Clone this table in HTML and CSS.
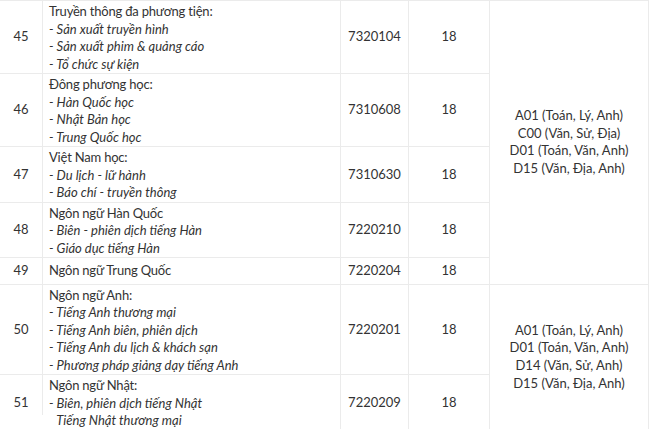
FILE: index.html
```html
<!DOCTYPE html>
<html lang="vi">
<head>
<meta charset="utf-8">
<link rel="stylesheet" href="styles.css">
</head>
<body>
<div class="page">
<table class="majors">
  <colgroup>
    <col class="c-num"><col class="c-name"><col class="c-code"><col class="c-score"><col class="c-combo">
  </colgroup>
  <tbody>
    <tr>
      <td class="num">45</td>
      <td class="name"><div class="head">Truyền thông đa phương tiện:</div><div class="sub">- Sản xuất truyền hình</div><div class="sub">- Sản xuất phim &amp; quảng cáo</div><div class="sub">- Tổ chức sự kiện</div></td>
      <td class="code">7320104</td>
      <td class="score">18</td>
      <td class="combo" rowspan="5"><div>A01 (Toán, Lý, Anh)</div><div>C00 (Văn, Sử, Địa)</div><div>D01 (Toán, Văn, Anh)</div><div>D15 (Văn, Địa, Anh)</div></td>
    </tr>
    <tr>
      <td class="num">46</td>
      <td class="name"><div class="head">Đông phương học:</div><div class="sub">- Hàn Quốc học</div><div class="sub">- Nhật Bản học</div><div class="sub">- Trung Quốc học</div></td>
      <td class="code">7310608</td>
      <td class="score">18</td>
    </tr>
    <tr>
      <td class="num">47</td>
      <td class="name"><div class="head">Việt Nam học:</div><div class="sub">- Du lịch - lữ hành</div><div class="sub">- Báo chí - truyền thông</div></td>
      <td class="code">7310630</td>
      <td class="score">18</td>
    </tr>
    <tr>
      <td class="num">48</td>
      <td class="name"><div class="head">Ngôn ngữ Hàn Quốc</div><div class="sub">- Biên - phiên dịch tiếng Hàn</div><div class="sub">- Giáo dục tiếng Hàn</div></td>
      <td class="code">7220210</td>
      <td class="score">18</td>
    </tr>
    <tr>
      <td class="num">49</td>
      <td class="name single"><div class="head">Ngôn ngữ Trung Quốc</div></td>
      <td class="code">7220204</td>
      <td class="score">18</td>
    </tr>
    <tr>
      <td class="num">50</td>
      <td class="name"><div class="head">Ngôn ngữ Anh:</div><div class="sub">- Tiếng Anh thương mại</div><div class="sub">- Tiếng Anh biên, phiên dịch</div><div class="sub">- Tiếng Anh du lịch &amp; khách sạn</div><div class="sub">- Phương pháp giảng dạy tiếng Anh</div></td>
      <td class="code">7220201</td>
      <td class="score">18</td>
      <td class="combo" rowspan="2"><div>A01 (Toán, Lý, Anh)</div><div>D01 (Toán, Văn, Anh)</div><div>D14 (Văn, Sử, Anh)</div><div>D15 (Văn, Địa, Anh)</div></td>
    </tr>
    <tr>
      <td class="num">51</td>
      <td class="name"><div class="head">Ngôn ngữ Nhật:</div><div class="sub">- Biên, phiên dịch tiếng Nhật</div><div class="sub">- Tiếng Nhật thương mại</div></td>
      <td class="code">7220209</td>
      <td class="score">18</td>
    </tr>
  </tbody>
</table>
<div class="mask"></div>
</div>
</body>
</html>
```

FILE: styles.css
```css
html, body {
  margin: 0;
  padding: 0;
  background: #fff;
}
.page {
  position: relative;
  width: 650px;
  height: 429px;
  overflow: hidden;
}
.majors {
  border-collapse: collapse;
  table-layout: fixed;
  width: 650px;
  margin-left: -1px;
  font-family: Lato, "Noto Sans", sans-serif;
  font-size: 13px;
  line-height: 17.5px;
  color: #333;
}
.c-num { width: 43px; }
.c-name { width: 298px; }
.c-code { width: 68px; }
.c-score { width: 81px; }
.c-combo { width: 159px; }
.majors td {
  border: 1px solid #ebebeb;
  padding: 4px 6px;
  vertical-align: middle;
}
.majors td.name {
  padding: 2px 6px 0;
  text-align: left;
}
.majors td.name.single {
  padding: 1px 6px;
}
.head {
  letter-spacing: -0.2px;
}
.combo div {
  line-height: 17.7px;
}
.num, .code, .score, .combo {
  text-align: center;
}
.sub {
  font-style: italic;
}
.mask {
  position: absolute;
  left: 0;
  top: 415px;
  width: 54px;
  height: 14px;
  background: #fff;
}
```
